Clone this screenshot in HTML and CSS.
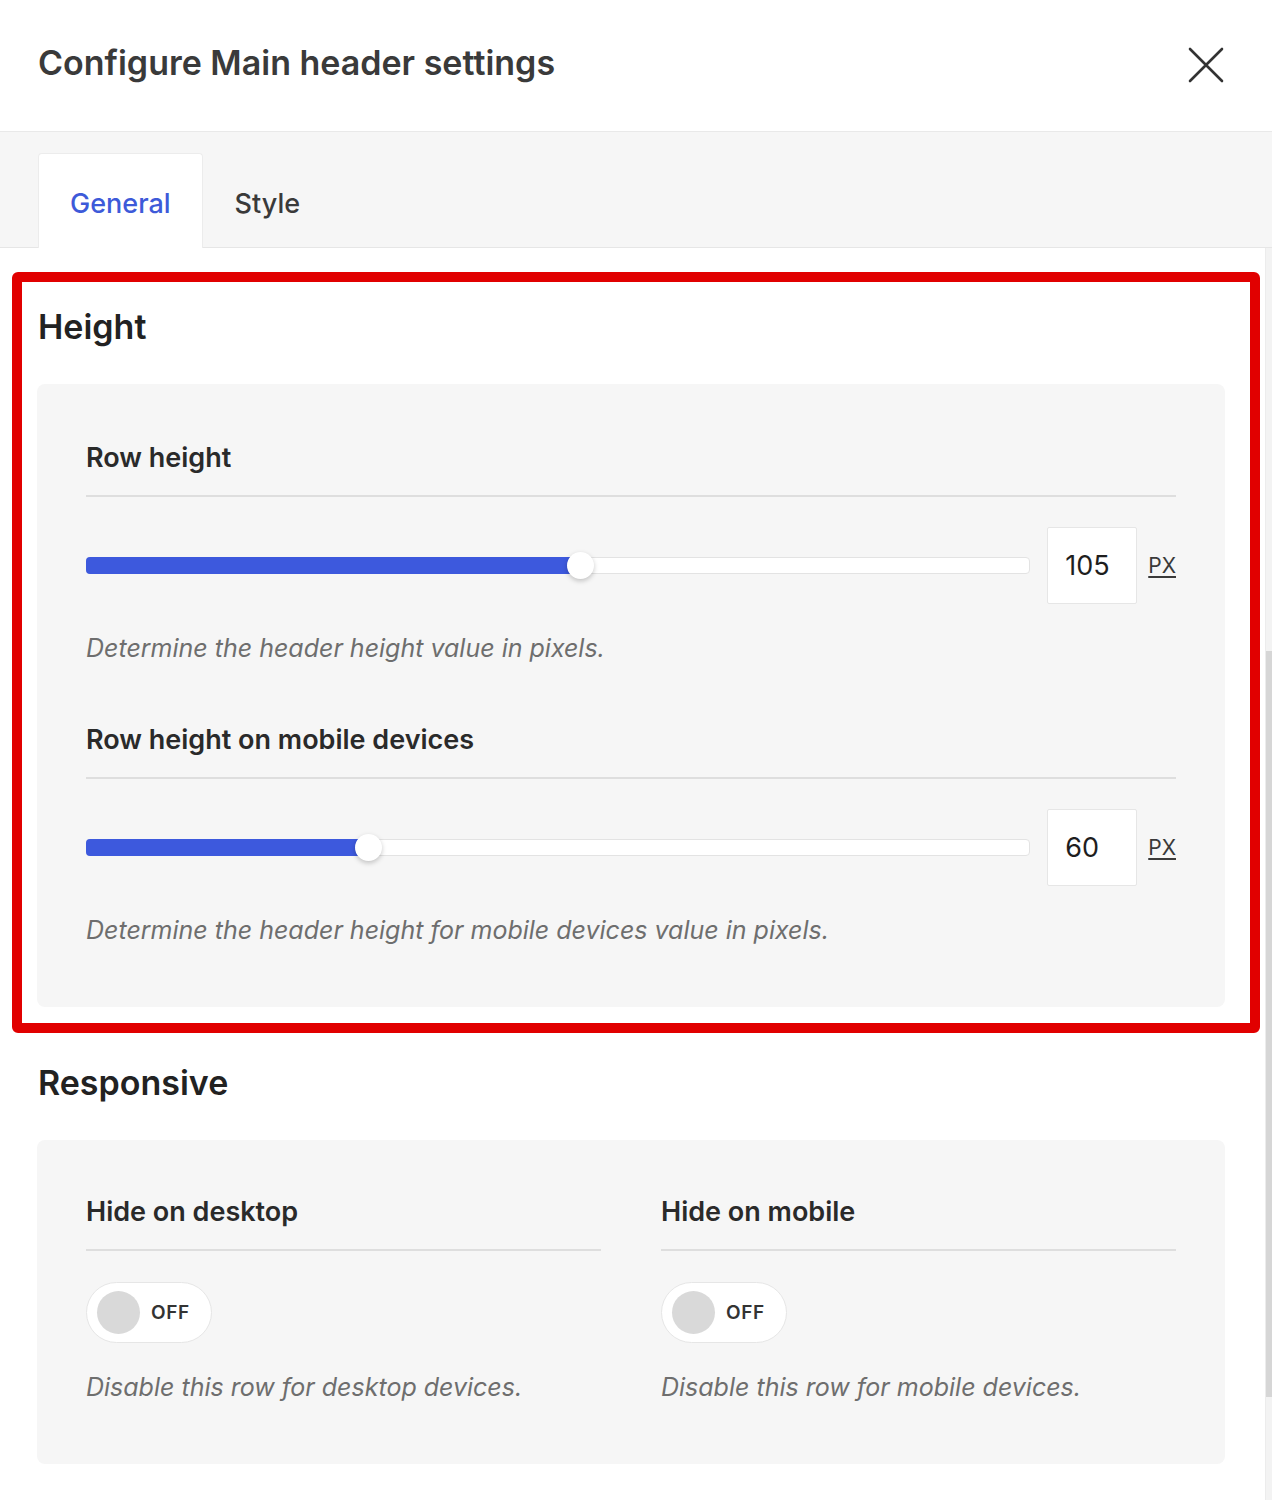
FILE: index.html
```html
<!DOCTYPE html>
<html lang="en">
<head>
  <meta charset="UTF-8">
  <title>Configure Main header settings</title>
  <link rel="stylesheet" href="styles.css">
</head>
<body>
  <header class="modal-head">
    <h1>Configure Main header settings</h1>
    <button class="close" aria-label="Close">
      <svg width="36" height="36" viewBox="0 0 36 36">
        <path d="M2 2 L34 34 M34 2 L2 34" stroke="#333" stroke-width="2.6" stroke-linecap="round" fill="none"/>
      </svg>
    </button>
  </header>

  <nav class="tabs">
    <a href="#" class="tab active">General</a>
    <a href="#" class="tab">Style</a>
  </nav>

  <div class="body">
    <main class="content">
      <div class="highlight"></div>

      <h2>Height</h2>
      <section class="panel">
        <div class="field">
          <h3>Row height</h3>
          <div class="range-row">
            <div class="track">
              <div class="fill" style="width: 52.5%"><span class="thumb"></span></div>
            </div>
            <div class="number">105</div>
            <a href="#" class="unit">PX</a>
          </div>
          <p class="desc">Determine the header height value in pixels.</p>
        </div>
        <div class="field">
          <h3>Row height on mobile devices</h3>
          <div class="range-row">
            <div class="track">
              <div class="fill" style="width: 30%"><span class="thumb"></span></div>
            </div>
            <div class="number">60</div>
            <a href="#" class="unit">PX</a>
          </div>
          <p class="desc">Determine the header height for mobile devices value in pixels.</p>
        </div>
      </section>

      <h2>Responsive</h2>
      <section class="panel cols">
        <div class="field">
          <h3>Hide on desktop</h3>
          <div class="toggle"><span class="knob"></span>OFF</div>
          <p class="desc">Disable this row for desktop devices.</p>
        </div>
        <div class="field">
          <h3>Hide on mobile</h3>
          <div class="toggle"><span class="knob"></span>OFF</div>
          <p class="desc">Disable this row for mobile devices.</p>
        </div>
      </section>
    </main>
    <div class="scrollbar"><div class="scroll-thumb"></div></div>
  </div>
</body>
</html>
```

FILE: styles.css
```css
html {
  box-sizing: border-box;
  font-family: Inter, "Noto Sans", sans-serif;
}
*, *::before, *::after {
  box-sizing: inherit;
}

body {
  margin: 0;
  background: #fff;
  color: #222;
}

.modal-head {
  height: 132px;
  display: flex;
  align-items: center;
  justify-content: space-between;
  padding: 0 48px 6px 38px;
  border-bottom: 1px solid #e9e9e9;
}
.modal-head h1 {
  margin: 0;
  font-size: 34px;
  font-weight: 600;
  color: #3a3a3a;
  letter-spacing: 0;
}
.close {
  border: 0;
  background: none;
  padding: 0;
  display: flex;
  margin-top: 4px;
}

.tabs {
  background: #f6f6f6;
  height: 116px;
  padding: 21px 0 0 38px;
  display: flex;
  border-bottom: 1px solid #e6e6e6;
}
.tab {
  display: flex;
  align-items: center;
  padding: 4px 31px 0;
  font-size: 27px;
  font-weight: 500;
  color: #3a3a3a;
  text-decoration: none;
  border: 1px solid transparent;
  border-bottom: 0;
  margin-bottom: -1px;
}
.tab.active {
  background: #fff;
  color: #3d5ad9;
  border-color: #ececec;
  border-radius: 4px 4px 0 0;
}

.body {
  display: flex;
}
.content {
  flex: 1;
  position: relative;
  padding: 59px 40px 40px 37px;
}
.scrollbar {
  width: 7px;
  background: #f3f3f3;
  border-left: 1px solid #ececec;
  padding-top: 403px;
}
.scroll-thumb {
  height: 746px;
  background: #d6d6d6;
}

/* red annotation frame */
.highlight {
  position: absolute;
  left: 12px;
  top: 24px;
  width: 1248px;
  height: 761px;
  border: 10px solid #e10000;
  border-radius: 6px;
  pointer-events: none;
}

h2 {
  margin: 0 0 37px 1px;
  font-size: 34px;
  line-height: 40px;
  font-weight: 600;
  color: #222;
}
.panel {
  background: #f6f6f6;
  border-radius: 8px;
  padding: 58px 49px 62px;
  margin-bottom: 56px;
}
.panel .field + .field {
  margin-top: 61px;
}
.panel.cols {
  display: grid;
  grid-template-columns: 1fr 1fr;
  column-gap: 60px;
  padding-top: 56px;
}
.panel.cols .field + .field {
  margin-top: 0;
}

h3 {
  margin: 0;
  font-size: 27px;
  line-height: 32px;
  font-weight: 600;
  color: #2a2a2a;
  padding-bottom: 21px;
  border-bottom: 2px solid #dedede;
}

.range-row {
  display: flex;
  align-items: center;
  margin-top: 30px;
}
.track {
  flex: 1;
  height: 17px;
  background: #fff;
  border: 1px solid #e3e3e3;
  border-radius: 4px;
  margin-right: 17px;
}
.fill {
  position: relative;
  height: 100%;
  margin: -1px 0 0 -1px;
  box-sizing: content-box;
  padding-bottom: 2px;
  background: #3d59dd;
  border-radius: 4px 0 0 4px;
}
.thumb {
  position: absolute;
  right: -13px;
  top: 50%;
  width: 27px;
  height: 27px;
  margin-top: -13.5px;
  border-radius: 50%;
  background: #fff;
  box-shadow: 0 2px 5px rgba(0,0,0,0.22);
}
.number {
  width: 90px;
  height: 77px;
  background: #fff;
  border: 1px solid #e6e6e6;
  border-radius: 2px;
  display: flex;
  align-items: center;
  padding-left: 17px;
  font-size: 27px;
  color: #1e1e1e;
}
.unit {
  margin-left: 11px;
  font-size: 21px;
  color: #3a3a3a;
  text-decoration: underline;
  text-underline-offset: 3px;
}

.desc {
  margin: 29px 0 0;
  font-size: 25px;
  line-height: 30px;
  font-style: italic;
  color: #6e6e6e;
}

.toggle {
  margin-top: 31px;
  width: 126px;
  height: 61px;
  border: 1px solid #e6e6e6;
  border-radius: 31px;
  background: #fff;
  display: flex;
  align-items: center;
  padding-left: 10px;
  font-size: 19px;
  font-weight: 600;
  letter-spacing: 0.6px;
  color: #333;
}
.knob {
  width: 43px;
  height: 43px;
  border-radius: 50%;
  background: #d9d9d9;
  margin-right: 11px;
}
```
